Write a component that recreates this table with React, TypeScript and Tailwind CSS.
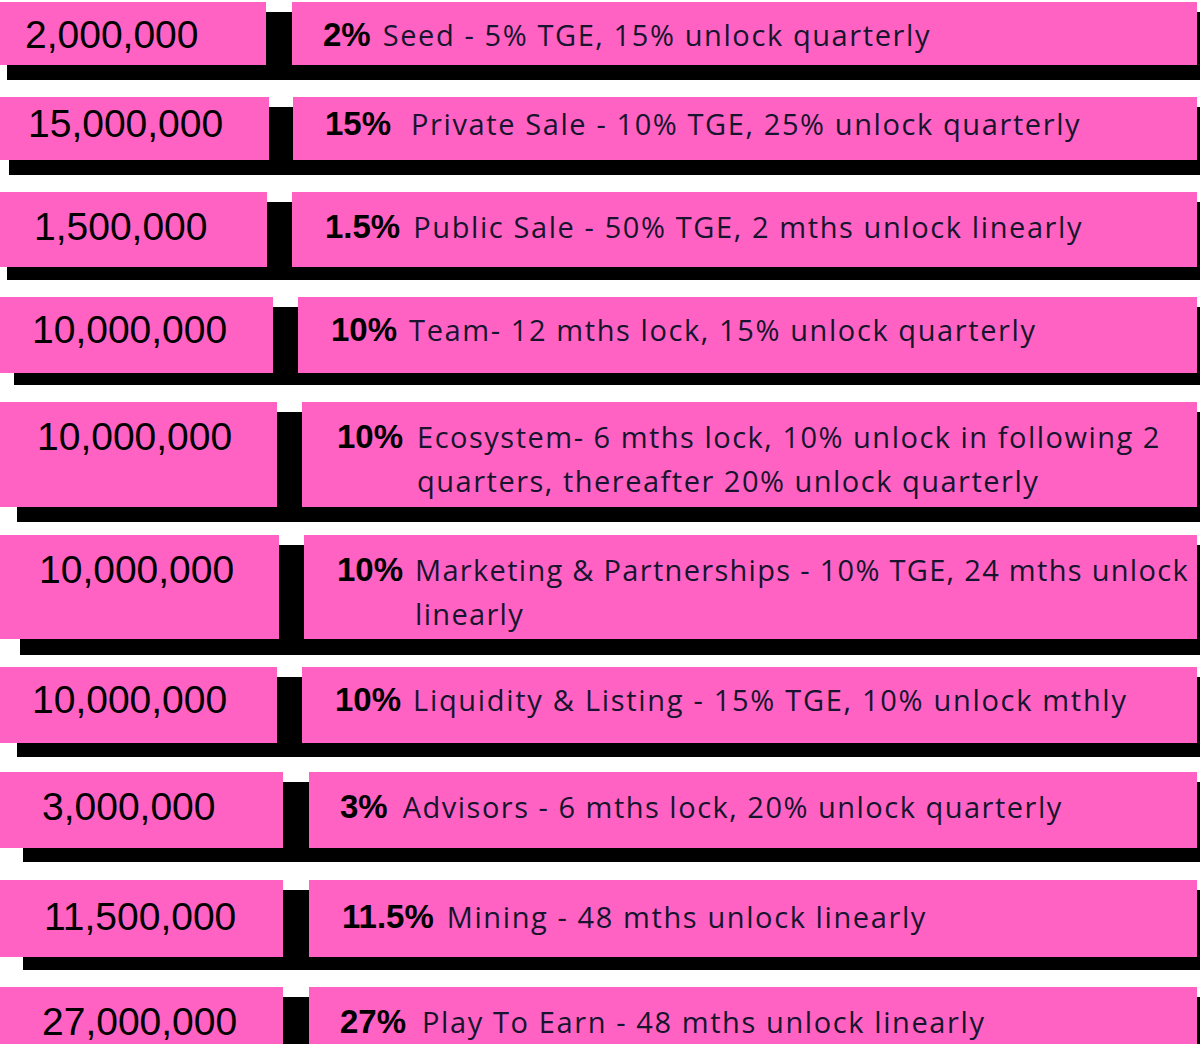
type Row = {
  amount: string;
  pct: string;
  lines: string[];
  wrap: string; // black shadow block offsets
  inner: string; // pulls content back over the shadow
  left: string;
  right: string;
  descGap: string;
};

const rows: Row[] = [
  {
    amount: "2,000,000",
    pct: "2%",
    lines: ["Seed - 5% TGE, 15% unlock quarterly"],
    wrap: "mt-[12px] ml-[7px]",
    inner: "-ml-[7px] mb-[15px] h-[63px]",
    left: "w-[266px] pl-[25px] pt-[11px]",
    right: "ml-[26px] pl-[31px] pt-[11px]",
    descGap: "ml-[12px] tracking-[1.6px]",
  },
  {
    amount: "15,000,000",
    pct: "15%",
    lines: ["Private Sale - 10% TGE, 25% unlock quarterly"],
    wrap: "mt-[27px] ml-[9px]",
    inner: "-ml-[9px] mb-[15px] h-[63px]",
    left: "w-[269px] pl-[28px] pt-[5px]",
    right: "ml-[24px] pl-[32px] pt-[5px]",
    descGap: "ml-[20px] tracking-[1.6px]",
  },
  {
    amount: "1,500,000",
    pct: "1.5%",
    lines: ["Public Sale - 50% TGE, 2 mths unlock linearly"],
    wrap: "mt-[27px] ml-[7px]",
    inner: "-ml-[7px] mb-[13px] h-[75px]",
    left: "w-[267px] pl-[34px] pt-[13px]",
    right: "ml-[25px] pl-[33px] pt-[13px]",
    descGap: "ml-[13px] tracking-[1.6px]",
  },
  {
    amount: "10,000,000",
    pct: "10%",
    lines: ["Team- 12 mths lock, 15% unlock quarterly"],
    wrap: "mt-[27px] ml-[14px]",
    inner: "-ml-[14px] mb-[12px] h-[76px]",
    left: "w-[273px] pl-[32px] pt-[11px]",
    right: "ml-[25px] pl-[33px] pt-[11px]",
    descGap: "ml-[12px] tracking-[1.6px]",
  },
  {
    amount: "10,000,000",
    pct: "10%",
    lines: [
      "Ecosystem- 6 mths lock, 10% unlock in following 2",
      "quarters, thereafter 20% unlock quarterly",
    ],
    wrap: "mt-[27px] ml-[17px]",
    inner: "-ml-[17px] mb-[15px] h-[105px]",
    left: "w-[277px] pl-[37px] pt-[13px]",
    right: "ml-[25px] pl-[35px] pt-[13px]",
    descGap: "ml-[14px] tracking-[1.5px]",
  },
  {
    amount: "10,000,000",
    pct: "10%",
    lines: ["Marketing & Partnerships - 10% TGE, 24 mths unlock", "linearly"],
    wrap: "mt-[23px] ml-[20px]",
    inner: "-ml-[20px] mb-[16px] h-[104px]",
    left: "w-[279px] pl-[39px] pt-[13px]",
    right: "ml-[25px] pl-[33px] pt-[13px]",
    descGap: "ml-[12px] tracking-[1.3px]",
  },
  {
    amount: "10,000,000",
    pct: "10%",
    lines: ["Liquidity & Listing - 15% TGE, 10% unlock mthly"],
    wrap: "mt-[22px] ml-[17px]",
    inner: "-ml-[17px] mb-[14px] h-[76px]",
    left: "w-[277px] pl-[32px] pt-[11px]",
    right: "ml-[25px] pl-[33px] pt-[11px]",
    descGap: "ml-[12px] tracking-[1.7px]",
  },
  {
    amount: "3,000,000",
    pct: "3%",
    lines: ["Advisors - 6 mths lock, 20% unlock quarterly"],
    wrap: "mt-[25px] ml-[23px]",
    inner: "-ml-[23px] mb-[14px] h-[76px]",
    left: "w-[283px] pl-[42px] pt-[13px]",
    right: "ml-[26px] pl-[31px] pt-[13px]",
    descGap: "ml-[15px] tracking-[1.5px]",
  },
  {
    amount: "11,500,000",
    pct: "11.5%",
    lines: ["Mining - 48 mths unlock linearly"],
    wrap: "mt-[28px] ml-[23px]",
    inner: "-ml-[23px] mb-[13px] h-[77px]",
    left: "w-[283px] pl-[44px] pt-[15px]",
    right: "ml-[26px] pl-[33px] pt-[15px]",
    descGap: "ml-[13px] tracking-[1.6px]",
  },
  {
    amount: "27,000,000",
    pct: "27%",
    lines: ["Play To Earn - 48 mths unlock linearly"],
    wrap: "mt-[27px] ml-[23px]",
    inner: "-ml-[23px] mb-[14px] h-[76px]",
    left: "w-[283px] pl-[42px] pt-[13px]",
    right: "ml-[26px] pl-[31px] pt-[13px]",
    descGap: "ml-[16px] tracking-[1.6px]",
  },
];

function AllocationRow({ row }: { row: Row }) {
  return (
    // black block sits behind the pink cells and peeks out as the shadow
    <div className={`flex flex-col bg-black ${row.wrap}`}>
      <div className={`flex -mt-[10px] ${row.inner}`}>
        <div
          className={`shrink-0 bg-[#ff62c2] text-[39px] leading-[44px] text-black font-['Liberation_Sans',Arial,sans-serif] ${row.left}`}
        >
          {row.amount}
        </div>
        <div className={`flex flex-1 items-baseline mr-[3px] bg-[#ff62c2] overflow-hidden ${row.right}`}>
          <span className="shrink-0 text-[33px] leading-[44px] font-bold text-black font-['Liberation_Sans',Arial,sans-serif]">
            {row.pct}
          </span>
          <div
            className={`whitespace-nowrap text-[29px] leading-[44px] text-[#16142e] font-['Open_Sans','Noto_Sans',sans-serif] ${row.descGap}`}
          >
            {row.lines.map((line, i) => (
              <div key={i}>{line}</div>
            ))}
          </div>
        </div>
      </div>
    </div>
  );
}

export default function App() {
  return (
    <div className="w-[1200px] h-[1044px] overflow-hidden bg-white">
      {rows.map((row, i) => (
        <AllocationRow key={i} row={row} />
      ))}
    </div>
  );
}
